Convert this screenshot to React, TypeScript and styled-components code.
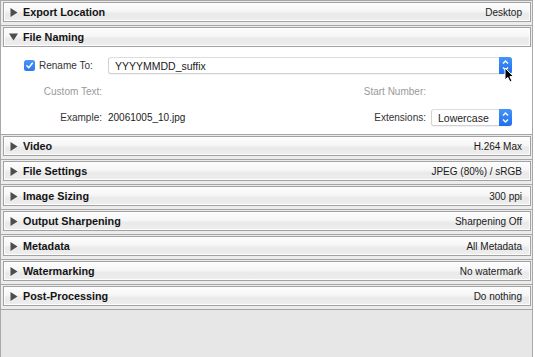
import { createGlobalStyle, styled } from "styled-components";

const GlobalStyle = createGlobalStyle`
  html, body {
    margin: 0;
    background: #ffffff;
  }
  body {
    font-family: "Liberation Sans", Arial, sans-serif;
  }
`;

const collapsed = [
  { title: "Video", summary: "H.264 Max" },
  { title: "File Settings", summary: "JPEG (80%) / sRGB" },
  { title: "Image Sizing", summary: "300 ppi" },
  { title: "Output Sharpening", summary: "Sharpening Off" },
  { title: "Metadata", summary: "All Metadata" },
  { title: "Watermarking", summary: "No watermark" },
  { title: "Post-Processing", summary: "Do nothing" },
];

const Arrow = ({ open }: { open?: boolean }) =>
  open ? (
    <svg width="9" height="8" viewBox="0 0 9 8">
      <path d="M0 0.5 L9 0.5 L4.5 7.5 Z" fill="#4d4d4d" />
    </svg>
  ) : (
    <svg width="8" height="9" viewBox="0 0 8 9">
      <path d="M0.5 0 L7.5 4.5 L0.5 9 Z" fill="#4d4d4d" />
    </svg>
  );

const StepperIcon = () => (
  <svg width="13" height="17" viewBox="0 0 13 17">
    <path d="M4 6.5 L6.5 4 L9 6.5" fill="none" stroke="#fff" strokeWidth="1.4" />
    <path d="M4 10.5 L6.5 13 L9 10.5" fill="none" stroke="#fff" strokeWidth="1.4" />
  </svg>
);

const Cursor = () => (
  <svg width="11" height="16" viewBox="0 0 11 16">
    <path
      d="M1 1 L1 13 L3.8 10.4 L6 15 L8 14 L5.9 9.6 L9.6 9.6 Z"
      fill="#000"
      stroke="#fff"
      strokeWidth="1"
      strokeLinejoin="round"
    />
  </svg>
);

const Header = ({ title, summary, open }: { title: string; summary?: string; open?: boolean }) => (
  <HeaderWrap $open={open}>
    <HeaderBar>
      <ArrowSlot>
        <Arrow open={open} />
      </ArrowSlot>
      <Title>{title}</Title>
      {summary && <Summary>{summary}</Summary>}
    </HeaderBar>
  </HeaderWrap>
);

const App = () => {
  return (
    <>
      <GlobalStyle />
      <Frame>
        <Section>
          <Header title="Export Location" summary="Desktop" />
        </Section>
        <Section>
          <Header title="File Naming" open />
          <NamingPanel>
            <RenameCell>
              <Checkbox>
                <svg width="9" height="9" viewBox="0 0 9 9">
                  <path
                    d="M1.8 4.8 L3.7 6.7 L7.3 2.2"
                    fill="none"
                    stroke="#fff"
                    strokeWidth="1.5"
                    strokeLinecap="round"
                    strokeLinejoin="round"
                  />
                </svg>
              </Checkbox>
              <Label>Rename To:</Label>
            </RenameCell>
            <TemplateField>
              <FieldText>YYYYMMDD_suffix</FieldText>
              <Stepper>
                <StepperIcon />
                <CursorSpot>
                  <Cursor />
                </CursorSpot>
              </Stepper>
            </TemplateField>

            <RightLabel $muted>Custom Text:</RightLabel>
            <Empty />
            <RightLabel $muted $gap={5}>
              Start Number:
            </RightLabel>
            <Empty />

            <RightLabel>Example:</RightLabel>
            <Value>20061005_10.jpg</Value>
            <RightLabel $gap={5}>Extensions:</RightLabel>
            <Popup>
              <FieldText>Lowercase</FieldText>
              <Stepper>
                <StepperIcon />
              </Stepper>
            </Popup>
          </NamingPanel>
        </Section>
        {collapsed.map((s) => (
          <Section key={s.title}>
            <Header title={s.title} summary={s.summary} />
          </Section>
        ))}
        <Filler />
      </Frame>
    </>
  );
};

const Frame = styled.div`
  width: 533px;
  height: 357px;
  box-sizing: border-box;
  border-left: 1px solid #a9a9a9;
  border-right: 1px solid #a9a9a9;
  background: #e8e8e8;
  display: flex;
  flex-direction: column;
  overflow: hidden;
`;

const Section = styled.div`
  border-top: 1px solid #a6a6a6;
  display: flex;
  flex-direction: column;
`;

const HeaderWrap = styled.div<{ $open?: boolean }>`
  padding: 1px 1px ${(p) => (p.$open ? "0" : "3px")} 2px;
  background: #ececec;
`;

const HeaderBar = styled.div`
  height: 20px;
  box-sizing: border-box;
  display: flex;
  align-items: center;
  padding: 0 8px 0 5px;
  border: 1px solid #a2a2a2;
  box-shadow: inset 0 0 0 1px #fdfdfd;
  background: linear-gradient(
    to bottom,
    #fdfdfd 0%,
    #f6f6f6 45%,
    #e9e9e9 60%,
    #eeeeee 100%
  );
`;

const ArrowSlot = styled.div`
  width: 9px;
  height: 9px;
  display: flex;
  align-items: center;
  justify-content: center;
  margin-right: 5px;
`;

const Title = styled.span`
  font-size: 10.8px;
  font-weight: 700;
  color: #141414;
  flex: 1;
`;

const Summary = styled.span`
  font-size: 10px;
  color: #1a1a1a;
`;

const NamingPanel = styled.div`
  background: #ffffff;
  display: grid;
  grid-template-columns: 107px 1fr 86px 81px;
  grid-template-rows: 17px 17px 17px;
  row-gap: 9px;
  padding: 10px 20px 8px 0;
  align-items: center;
  font-size: 10px;
`;

const RenameCell = styled.div`
  display: flex;
  align-items: center;
  padding-left: 23px;
  gap: 4px;
`;

const Checkbox = styled.span`
  width: 11px;
  height: 11px;
  border-radius: 2.5px;
  background: linear-gradient(to bottom, #4b95f8, #2a78f0);
  display: flex;
  align-items: center;
  justify-content: center;
`;

const Label = styled.span`
  color: #333;
`;

const RightLabel = styled.span<{ $muted?: boolean; $gap?: number }>`
  text-align: right;
  padding-right: ${(p) => p.$gap ?? 6}px;
  color: ${(p) => (p.$muted ? "#9a9a9a" : "#333")};
`;

const Value = styled.span`
  color: #222;
`;

const Empty = styled.span``;

const FieldBox = styled.div`
  height: 17px;
  box-sizing: border-box;
  display: flex;
  align-items: center;
  background: #fff;
  border: 1px solid #d2d2d2;
  border-top-color: #dcdcdc;
  border-radius: 3px;
  box-shadow: 0 1px 1px rgba(0, 0, 0, 0.06);
`;

const TemplateField = styled(FieldBox)`
  grid-column: 2 / 5;
`;

const Popup = styled(FieldBox)``;

const FieldText = styled.span`
  flex: 1;
  padding-left: 6px;
  color: #222;
  font-size: 10.5px;
`;

const Stepper = styled.div`
  position: relative;
  width: 13px;
  height: 17px;
  margin: -1px -1px -1px 0;
  border-radius: 0 3px 3px 0;
  background: linear-gradient(to bottom, #4594f8, #1f6fef);
  display: flex;
`;

const CursorSpot = styled.div`
  position: absolute;
  left: 5px;
  top: 10px;
  display: flex;
`;

const Filler = styled.div`
  flex: 1;
  border-top: 1px solid #a6a6a6;
  background: #e7e7e7;
`;

export default App;
